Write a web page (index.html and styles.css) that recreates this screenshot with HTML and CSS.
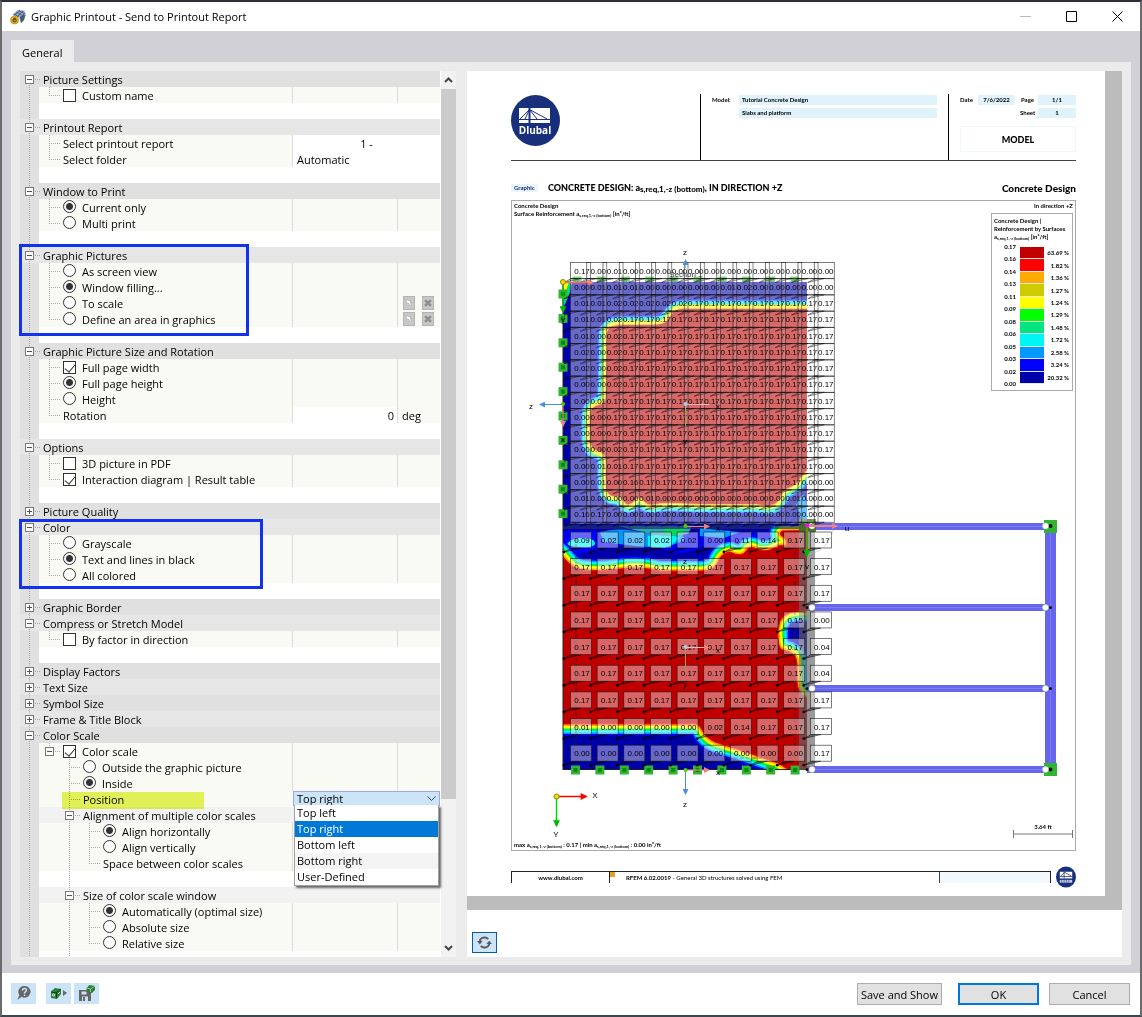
FILE: index.html
```html
<!DOCTYPE html>
<html lang="en">
<head>
<meta charset="utf-8">
<title>Graphic Printout - Send to Printout Report</title>
<link rel="stylesheet" href="styles.css">
</head>
<body>
<div class="window">
  <header class="titlebar">
    <svg class="app-icon" viewBox="0 0 16 16" aria-hidden="true">
      <path d="M2 6 8 1l6 .5 2 4.500-2 5-3 3-2-6-3-1z" fill="#8da2c2"/>
      <path d="M4 5l5 3M6.500 3l5 3M9 1.500l5 3M4 6.500l6-5M7 8l6-6M10 9l5-5" stroke="#3f5777" fill="none" stroke-width=".8"/>
      <path d="M10 8l3-2 2 0-1 5-3 3z" fill="#4a5a74"/>
      <circle cx="4.500" cy="11" r="4" fill="#e3b22c" stroke="#a87d10" stroke-width=".6"/>
      <path d="M6 9.500C4.500 8.500 3 9.500 3 11.500c0 2 3.200 2 3.200 0 0-1.500-2.500-1.600-3 0" fill="none" stroke="#6b4e08" stroke-width="1.100"/>
    </svg>
    <h1>Graphic Printout - Send to Printout Report</h1>
    <div class="window-buttons">
      <button type="button" aria-label="Minimize"><svg viewBox="0 0 11 11"><path d="M0 5.500h11" stroke="#bbb"/></svg></button>
      <button type="button" aria-label="Maximize"><svg viewBox="0 0 11 11"><path d="M.5.5h10v10H.5z" stroke="#000"/></svg></button>
      <button type="button" aria-label="Close"><svg viewBox="0 0 11 11"><path d="M.5.5l10 10M10.500.5l-10 10" stroke="#000"/></svg></button>
    </div>
  </header>

  <nav class="tabs"><button type="button" class="tab">General</button></nav>

  <main class="panel">
    <div class="settings">
      <div class="tree">
        <section class="group">
          <h2 class="head first"><button type="button" class="toggle" aria-label="Collapse"></button>Picture Settings</h2>
          <div class="row"><label class="name"><i class="branch last"></i><input type="checkbox">Custom name</label><span class="cell"></span><span class="cell"></span></div>
          <div class="row blank"></div>
        </section>
        <section class="group">
          <h2 class="head"><button type="button" class="toggle" aria-label="Collapse"></button>Printout Report</h2>
          <div class="row"><span class="name"><i class="branch"></i>Select printout report</span><span class="cell edit wide center">1 -</span></div>
          <div class="row"><span class="name"><i class="branch last"></i>Select folder</span><span class="cell edit wide">Automatic</span></div>
          <div class="row blank"></div>
        </section>
        <section class="group">
          <h2 class="head"><button type="button" class="toggle" aria-label="Collapse"></button>Window to Print</h2>
          <div class="row"><label class="name"><i class="branch"></i><input type="radio" name="window" checked>Current only</label><span class="cell"></span><span class="cell"></span></div>
          <div class="row"><label class="name"><i class="branch last"></i><input type="radio" name="window">Multi print</label><span class="cell"></span><span class="cell"></span></div>
          <div class="row blank"></div>
        </section>
        <section class="group">
          <h2 class="head"><button type="button" class="toggle" aria-label="Collapse"></button>Graphic Pictures</h2>
          <div class="row"><label class="name"><i class="branch"></i><input type="radio" name="fit">As screen view</label><span class="cell"></span><span class="cell"></span></div>
          <div class="row"><label class="name"><i class="branch"></i><input type="radio" name="fit" checked>Window filling...</label><span class="cell"></span><span class="cell"></span></div>
          <div class="row"><label class="name"><i class="branch"></i><input type="radio" name="fit">To scale</label><span class="cell"></span><span class="cell tools">
            <button type="button" disabled aria-label="Pick"><svg viewBox="0 0 12 14"><path d="M2 3l7 2-2 1 2 3-1 1-3-3-1 1z" fill="#fff" stroke="#999" stroke-width=".6"/></svg></button>
            <button type="button" disabled aria-label="Clear"><svg viewBox="0 0 12 14"><path d="M2.500 3.500l7 7M9.500 3.500l-7 7" stroke="#8f8f8f" stroke-width="3"/></svg></button></span></div>
          <div class="row"><label class="name"><i class="branch last"></i><input type="radio" name="fit">Define an area in graphics</label><span class="cell"></span><span class="cell tools">
            <button type="button" disabled aria-label="Pick"><svg viewBox="0 0 12 14"><path d="M2 3l7 2-2 1 2 3-1 1-3-3-1 1z" fill="#fff" stroke="#999" stroke-width=".6"/></svg></button>
            <button type="button" disabled aria-label="Clear"><svg viewBox="0 0 12 14"><path d="M2.500 3.500l7 7M9.500 3.500l-7 7" stroke="#8f8f8f" stroke-width="3"/></svg></button></span></div>
          <div class="row blank"></div>
          <div class="callout callout-pictures"></div>
        </section>
        <section class="group">
          <h2 class="head"><button type="button" class="toggle" aria-label="Collapse"></button>Graphic Picture Size and Rotation</h2>
          <div class="row"><label class="name"><i class="branch"></i><input type="checkbox" checked>Full page width</label><span class="cell"></span><span class="cell"></span></div>
          <div class="row"><label class="name"><i class="branch"></i><input type="radio" name="size" checked>Full page height</label><span class="cell"></span><span class="cell"></span></div>
          <div class="row"><label class="name"><i class="branch"></i><input type="radio" name="size">Height</label><span class="cell"></span><span class="cell"></span></div>
          <div class="row"><span class="name"><i class="branch last"></i>Rotation</span><span class="cell edit number">0</span><span class="cell">deg</span></div>
          <div class="row blank"></div>
        </section>
        <section class="group">
          <h2 class="head"><button type="button" class="toggle" aria-label="Collapse"></button>Options</h2>
          <div class="row"><label class="name"><i class="branch"></i><input type="checkbox">3D picture in PDF</label><span class="cell"></span><span class="cell"></span></div>
          <div class="row"><label class="name"><i class="branch last"></i><input type="checkbox" checked>Interaction diagram | Result table</label><span class="cell"></span><span class="cell"></span></div>
          <div class="row blank"></div>
        </section>
        <section class="group">
          <h2 class="head"><button type="button" class="toggle plus" aria-label="Expand"></button>Picture Quality</h2>
        </section>
        <section class="group">
          <h2 class="head"><button type="button" class="toggle" aria-label="Collapse"></button>Color</h2>
          <div class="row"><label class="name"><i class="branch"></i><input type="radio" name="color">Grayscale</label><span class="cell"></span><span class="cell"></span></div>
          <div class="row"><label class="name"><i class="branch"></i><input type="radio" name="color" checked>Text and lines in black</label><span class="cell"></span><span class="cell"></span></div>
          <div class="row"><label class="name"><i class="branch last"></i><input type="radio" name="color">All colored</label><span class="cell"></span><span class="cell"></span></div>
          <div class="row blank"></div>
          <div class="callout callout-color"></div>
        </section>
        <section class="group">
          <h2 class="head"><button type="button" class="toggle plus" aria-label="Expand"></button>Graphic Border</h2>
        </section>
        <section class="group">
          <h2 class="head"><button type="button" class="toggle" aria-label="Collapse"></button>Compress or Stretch Model</h2>
          <div class="row"><label class="name"><i class="branch last"></i><input type="checkbox">By factor in direction</label><span class="cell"></span><span class="cell"></span></div>
          <div class="row blank"></div>
        </section>
        <section class="group"><h2 class="head"><button type="button" class="toggle plus" aria-label="Expand"></button>Display Factors</h2></section>
        <section class="group"><h2 class="head"><button type="button" class="toggle plus" aria-label="Expand"></button>Text Size</h2></section>
        <section class="group"><h2 class="head"><button type="button" class="toggle plus" aria-label="Expand"></button>Symbol Size</h2></section>
        <section class="group"><h2 class="head"><button type="button" class="toggle plus" aria-label="Expand"></button>Frame &amp; Title Block</h2></section>
        <section class="group">
          <h2 class="head"><button type="button" class="toggle" aria-label="Collapse"></button>Color Scale</h2>
          <div class="row"><span class="name"><span class="knot"><button type="button" class="toggle" aria-label="Collapse"></button></span><label><input type="checkbox" checked>Color scale</label></span><span class="cell"></span><span class="cell"></span></div>
          <div class="row"><label class="name"><i class="pad"></i><i class="branch"></i><input type="radio" name="place">Outside the graphic picture</label><span class="cell"></span><span class="cell"></span></div>
          <div class="row"><label class="name"><i class="pad"></i><i class="branch"></i><input type="radio" name="place" checked>Inside</label><span class="cell"></span><span class="cell"></span></div>
          <div class="row position">
            <span class="name"><i class="pad"></i><i class="branch"></i><label for="position">Position</label></span>
            <span class="cell wide combo">
              <select id="position"><option>Top right</option></select>
              <svg class="chevron" viewBox="0 0 9 6" aria-hidden="true"><path d="M.5.5l4 4 4-4" fill="none" stroke="#444"/></svg>
              <ul class="options" role="listbox" aria-label="Position">
                <li role="option">Top left</li>
                <li role="option" aria-selected="true">Top right</li>
                <li role="option">Bottom left</li>
                <li role="option">Bottom right</li>
                <li role="option">User-Defined</li>
              </ul>
            </span>
          </div>
          <div class="row sub"><span class="name"><i class="pad"></i><span class="knot"><button type="button" class="toggle" aria-label="Collapse"></button></span>Alignment of multiple color scales</span></div>
          <div class="row"><label class="name"><i class="pad"></i><i class="pad line"></i><i class="branch"></i><input type="radio" name="align" checked>Align horizontally</label><span class="cell"></span><span class="cell"></span></div>
          <div class="row"><label class="name"><i class="pad"></i><i class="pad line"></i><i class="branch"></i><input type="radio" name="align">Align vertically</label><span class="cell"></span><span class="cell"></span></div>
          <div class="row"><span class="name"><i class="pad"></i><i class="pad line"></i><i class="branch last"></i>Space between color scales</span><span class="cell"></span><span class="cell"></span></div>
          <div class="row blank"><span class="name"><i class="pad"></i><i class="pad line"></i></span></div>
          <div class="row sub"><span class="name"><i class="pad"></i><span class="knot"><button type="button" class="toggle" aria-label="Collapse"></button></span>Size of color scale window</span></div>
          <div class="row"><label class="name"><i class="pad"></i><i class="pad line"></i><i class="branch"></i><input type="radio" name="box" checked>Automatically (optimal size)</label><span class="cell"></span><span class="cell"></span></div>
          <div class="row"><label class="name"><i class="pad"></i><i class="pad line"></i><i class="branch"></i><input type="radio" name="box">Absolute size</label><span class="cell"></span><span class="cell"></span></div>
          <div class="row"><label class="name"><i class="pad"></i><i class="pad line"></i><i class="branch last"></i><input type="radio" name="box">Relative size</label><span class="cell"></span><span class="cell"></span></div>
          <div class="row blank cut"><span class="name"><i class="pad"></i><i class="pad line"></i></span></div>
        </section>
      </div>
      <div class="scrollbar">
        <svg viewBox="0 0 9 6" aria-hidden="true"><path d="M1 5l3.500-3.500L8 5" fill="none" stroke="#444" stroke-width="2"/></svg>
        <div class="thumb"></div>
        <svg viewBox="0 0 9 6" aria-hidden="true"><path d="M1 1l3.500 3.500L8 1" fill="none" stroke="#444" stroke-width="2"/></svg>
      </div>
    </div>

    <div class="preview">
      <div class="desk">
        <article class="sheet">
          <header class="letterhead">
            <div class="brand">
              <svg viewBox="0 0 49 51" aria-label="Dlubal">
                <ellipse cx="24.500" cy="25.500" rx="24.500" ry="25.500" fill="#182f7c"/>
                <path d="M8 13h31v15H8z" fill="#fff"/>
                <path d="M8 24.500h31M9 24l9.500-9.500L36 24M14 24l4.500-9.500L26 24" stroke="#182f7c" fill="none"/>
                <path d="M18.500 13v15" stroke="#182f7c" stroke-width="2"/>
                <text x="24" y="38.500" class="logo-text">Dlubal</text>
              </svg>
            </div>
            <dl class="model">
              <dt>Model:</dt><dd>Tutorial Concrete Design</dd>
              <dd class="second">Slabs and platform</dd>
            </dl>
            <div class="meta">
              <dl>
                <dt>Date</dt><dd>7/6/2022</dd><dt>Page</dt><dd>1/1</dd>
                <dt class="sheet-no">Sheet</dt><dd>1</dd>
              </dl>
              <p class="kind">MODEL</p>
            </div>
          </header>

          <div class="caption">
            <span class="chip">Graphic</span>
            <h3>CONCRETE DESIGN: a<sub>s,req,1,-z (bottom)</sub>, IN DIRECTION +Z</h3>
            <strong>Concrete Design</strong>
          </div>

          <div class="frame">
            <svg class="plot" viewBox="512 201 563 649" role="img" aria-label="Surface reinforcement contour plot">
              <defs>
                <clipPath id="upper"><path d="M563 282h244v244H563z"/></clipPath>
                <clipPath id="lower"><path d="M563 526h244v244H563z"/></clipPath>
                <path id="upper-red" d="M830 309H690Q678 308 674 312T667 321Q664 325 650 325T622 325Q607 325 607 335V360L606 395Q606 404 599 405T590 414V438Q590 449 598 451T606 460V482Q606 496 614 496T623 500Q628 508 634 501T643 500Q648 506 655 504T680 503T705 504T730 504T757 504Q775 508 779 499T786 489Q796 485 799 480T807 470H830z"/>
                <path id="lower-red" d="M550 546Q560 552 566 560T582 570Q600 572 620 569T660 571H700Q715 571 718 562T730 552Q742 558 746 551T758 550Q768 552 774 548T786 546Q788 540 783 537T782 531L830 530V611H800Q779 611 778 630T783 650Q797 652 797 664V682Q798 694 807 698H830V775H796Q786 768 778 763L740 750L715 742Q706 738 702 730T690 724H550z"/>
                <marker id="tip-blue" viewBox="0 0 6 6" refX="5" refY="3" markerWidth="6" markerHeight="6" markerUnits="userSpaceOnUse" orient="auto"><path d="M0 0l6 3-6 3z" fill="#4a90e0"/></marker>
                <marker id="tip-pink" viewBox="0 0 6 6" refX="5" refY="3" markerWidth="6" markerHeight="6" markerUnits="userSpaceOnUse" orient="auto"><path d="M0 0l6 3-6 3z" fill="#f08080"/></marker>
                <marker id="tip-red" viewBox="0 0 6 6" refX="5" refY="3" markerWidth="8" markerHeight="7" markerUnits="userSpaceOnUse" orient="auto"><path d="M0 0l6 3-6 3z" fill="#f00"/></marker>
                <marker id="tip-green" viewBox="0 0 6 6" refX="5" refY="3" markerWidth="8" markerHeight="7" markerUnits="userSpaceOnUse" orient="auto"><path d="M0 0l6 3-6 3z" fill="#0b0"/></marker>
              </defs>

              <g id="supports-back"></g>
              <g clip-path="url(#upper)">
                <path d="M563 282h244v244H563z" fill="#0000a8"/>
                <path d="M563 282h9l-2 10-4 10-3 6z" fill="#00e080"/><path d="M563 282h6l-4 12-2 2z" fill="#ff0"/>
                <path d="M796 505q5-10 7-10t4 10v20h-4z" fill="#09f"/>
                <g class="bands">
                  <use href="#upper-red" stroke="#00f" stroke-width="20"/><use href="#upper-red" stroke="#09f" stroke-width="17"/>
                  <use href="#upper-red" stroke="#00f5f5" stroke-width="15"/><use href="#upper-red" stroke="#00e080" stroke-width="11"/>
                  <use href="#upper-red" stroke="#cf0" stroke-width="9"/><use href="#upper-red" stroke="#ff0" stroke-width="7"/>
                  <use href="#upper-red" stroke="#fa0" stroke-width="2"/>
                </g>
                <use href="#upper-red" fill="#c00000"/>
              </g>
              <g clip-path="url(#lower)">
                <path d="M563 526h244v244H563z" fill="#0000a8"/>
                <path d="M563 532q14-4 40 0t90 2q10-6 40 0l60-4v16l-20-4-40 10-30-6q-20 12-40 3t-60 0-40 2z" fill="#00f"/>
                <path d="M600 532q20-6 50 2l30-4 5 10-20 8-30-2-32-4zM700 528q18 2 40 4l-16 6-24-2z" fill="#09f"/>
                <path d="M568 543q4-5 15-5t12 5-15 4-12-4zM648 536q20-4 32 2l-10 8q-12 4-22 0z" fill="#00f5f5"/>
                <path d="M618 526h74l-4 8q-20 4-38 0z" fill="#2ca8b0"/><path d="M664 528h22l-4 6q-10 4-18-2z" fill="#00d860"/>
                <g class="bands">
                  <use href="#lower-red" stroke="#00f" stroke-width="24"/><use href="#lower-red" stroke="#09f" stroke-width="20"/>
                  <use href="#lower-red" stroke="#00f5f5" stroke-width="17"/><use href="#lower-red" stroke="#00e080" stroke-width="13"/>
                  <use href="#lower-red" stroke="#0f0" stroke-width="11"/><use href="#lower-red" stroke="#ff0" stroke-width="9"/>
                  <use href="#lower-red" stroke="#fa0" stroke-width="4"/>
                </g>
                <use href="#lower-red" fill="#c00000" stroke="#f00" stroke-width="1"/>
              </g>
              <path d="M563 282v488M563 769.500h244" stroke="#222" fill="none"/>
              <path d="M563 527h244" stroke="#222d6c" stroke-opacity=".7" stroke-width="4"/>
              <path d="M576 532v226h219V532" stroke="#222" stroke-width=".7" stroke-dasharray="4 2" fill="none"/>
              <g id="supports"></g>

              <g stroke="#6666ec" stroke-width="7"><path d="M807 526.500h243M807 607.500h243M807 688.500h243M807 769.500h243"/><path d="M1050.500 526v244" stroke-width="11"/></g>
              <g stroke="#7c7cf0" stroke-width="1"><path d="M815 526.500h230M815 607.500h230M815 688.500h230M815 769.500h230M1050.500 532v230"/></g>
              <g fill="#32b432"><path d="M1044 520h13v13h-13zM1044 763h13v13h-13z"/></g>
              <path d="M799 522h16v248h-16z" fill="#646464" fill-opacity=".66"/>
              <path d="M799 519h17v13h-17z" fill="#3c6e1e" fill-opacity=".8"/>
              <g fill="#111"><circle cx="1050.500" cy="526" r="2"/><circle cx="1050.500" cy="607.500" r="1.500"/><circle cx="1050.500" cy="688.500" r="1.500"/><circle cx="1050.500" cy="769.500" r="2"/><circle cx="807" cy="607.500" r="1.500"/><circle cx="807" cy="688.500" r="1.500"/><circle cx="807" cy="769.500" r="1.500"/></g>
              <g fill="#fff" stroke="#c8c8c8" stroke-width=".5"><circle cx="1045.500" cy="526" r="3"/><circle cx="1045.500" cy="607.500" r="3"/><circle cx="1045.500" cy="688.500" r="3"/><circle cx="1045.500" cy="769.500" r="3"/><circle cx="812" cy="526" r="3"/><circle cx="812" cy="607.500" r="3"/><circle cx="812" cy="688.500" r="3"/><circle cx="812" cy="769.500" r="3"/></g>

              <g id="labels"></g>

              <g class="axes" fill="none">
                <path d="M685.500 268v-8" stroke="#7cc8f0" marker-end="url(#tip-blue)"/>
                <path d="M563 404.500h-23" stroke="#4a90e0" marker-end="url(#tip-blue)"/>
                <path d="M685.500 770v24" stroke="#4a90e0" marker-end="url(#tip-blue)"/>
                <path d="M563 404v22" stroke="#f08080" marker-end="url(#tip-pink)"/>
                <path d="M563 282v30" stroke="#0b0" marker-end="url(#tip-green)"/>
                <path d="M563 282.500h30" stroke="#f66" stroke-width="1.500" marker-end="url(#tip-pink)"/>
                <path d="M685.500 404.500h24M685.500 647.500h23" stroke="#f4b8b8" marker-end="url(#tip-pink)"/>
                <path d="M685.500 404v22M685.500 647v24" stroke="#a0a050"/>
                <path d="M685 526.500h24" stroke="#f08080" marker-end="url(#tip-pink)"/><path d="M685 770h24" stroke="#f08080" marker-end="url(#tip-pink)"/>
                <path d="M807 526h30" stroke="#f08080" stroke-width="2" marker-end="url(#tip-pink)"/>
                <path d="M807 526v30" stroke="#5a9a10" stroke-width="2" marker-end="url(#tip-green)"/>
                <path d="M833 530a28 28 0 0 1-24 24" stroke="#bbb" stroke-width=".5"/>
                <path d="M556.500 796.500h30" stroke="#f00" stroke-width="1.500" marker-end="url(#tip-red)"/>
                <path d="M556.500 797v29" stroke="#0d0" stroke-width="1.500" marker-end="url(#tip-green)"/>
                <circle cx="556.500" cy="796.500" r="2.500" fill="#f0e000" stroke="#880"/>
                <circle cx="563" cy="282" r="2.500" fill="#f0e000" stroke="#880"/>
                <circle cx="685.500" cy="526" r="2" fill="#5c0"/><circle cx="685.500" cy="770" r="2" fill="#5c0"/><circle cx="563" cy="404" r="2" fill="#5c0"/>
                <circle cx="685.500" cy="404" r="2" fill="#a8d0e8"/><circle cx="685.500" cy="647" r="2" fill="#a8d0e8"/><circle cx="807" cy="525.500" r="2" fill="#f0f"/>
              </g>
              <g class="axis-text">
                <text x="685" y="255">z</text><text x="531" y="409">z</text><text x="685" y="807">z</text><text x="685" y="564">z</text>
                <text x="718" y="409">x</text><text x="718" y="531">x</text><text x="718" y="653">x</text><text x="718" y="775">x</text>
                <text x="685" y="444">y</text><text x="685" y="687">y</text><text x="563" y="322">y</text><text x="563" y="442">x</text>
                <text x="847" y="531">u</text><text x="807" y="569">v</text>
                <text x="595" y="798">X</text><text x="556" y="837">Y</text>
                <text x="686" y="277" fill="#444">Section 1</text>
              </g>
              <path d="M1013 834h60M1013.500 830v8M1072.500 830v8" stroke="#777" fill="none"/>
              <text class="scale-text" x="1043" y="829">3.64 ft</text>
            </svg>
            <p class="note">Concrete Design<br>Surface Reinforcement a<sub>s,req,1,-z (bottom)</sub> [in²/ft]</p>
            <p class="direction">In direction +Z</p>
            <p class="range">max a<sub>s,req,1,-z (bottom)</sub> : 0.17 | min a<sub>s,req,1,-z (bottom)</sub> : 0.00 in²/ft</p>
            <aside class="legend">
              <p>Concrete Design |<br>Reinforcement by Surfaces<br>a<sub>s,req,1,-z (bottom)</sub> [in²/ft]</p>
              <div class="scale">
                <ol class="bounds"><li>0.17</li><li>0.16</li><li>0.14</li><li>0.13</li><li>0.11</li><li>0.09</li><li>0.08</li><li>0.06</li><li>0.05</li><li>0.03</li><li>0.02</li><li>0.00</li></ol>
                <ol class="shares"><li class="c1">63.69 %</li><li class="c2">1.82 %</li><li class="c3">1.36 %</li><li class="c4">1.27 %</li><li class="c5">1.24 %</li><li class="c6">1.29 %</li><li class="c7">1.48 %</li><li class="c8">1.72 %</li><li class="c9">2.58 %</li><li class="c10">3.24 %</li><li class="c11">20.32 %</li></ol>
              </div>
            </aside>
          </div>

          <footer class="imprint">
            <div class="imprint-bar"><a href="#">www.dlubal.com</a><span class="product"><b>RFEM 6.02.0019</b> - General 3D structures solved using FEM</span><span class="spare"></span></div>
            <svg viewBox="0 0 21 22" aria-label="Dlubal">
              <ellipse cx="10.500" cy="11" rx="10.500" ry="11" fill="#182f7c"/>
              <path d="M4 5.500h13v7H4z" fill="#fff"/><path d="M4 10.500h13M5 10l4-4 7 4M8.500 5.500v7" stroke="#182f7c" stroke-width=".8" fill="none"/>
              <path d="M4 14h13v3H4z" fill="#c6cce4"/><path d="M6 14v3M8.500 14v3M11 14v3M13.500 14v3" stroke="#182f7c" stroke-width=".6"/>
            </svg>
          </footer>
        </article>
      </div>
      <div class="preview-tools">
        <button type="button" aria-label="Refresh"><svg viewBox="0 0 16 16"><path d="M3 7a5 4.500 0 0 1 9-2.500M13 9a5 4.500 0 0 1-9 2.500" fill="none" stroke="#5a5a5a" stroke-width="2"/><path d="M0 6.500h6L3 10zM10 9.500h6L13 6z" fill="#5a5a5a"/></svg></button>
      </div>
    </div>
  </main>

  <footer class="actions">
    <button type="button" class="tool" aria-label="Help"><svg viewBox="0 0 16 16"><path d="M8.500 1a6 5.800 0 1 1-3 10.800L1.500 15l1.800-5A6 5.800 0 0 1 8.500 1z" fill="#666"/><path d="M6.500 5.500q0-2 2-2t2 1.800q0 1.200-2 2.200v1M8.500 9.500v1.500" stroke="#cce4f7" stroke-width="1.400" fill="none"/></svg></button>
    <button type="button" class="tool spaced" aria-label="Load defaults"><svg viewBox="0 0 16 16"><path d="M0 6.500l4-3.500 6 1v5l-4 5-6-1z" fill="#2f7d3a"/><path d="M0 7l5 1 5-4M5.500 8v5" stroke="#123f18" fill="none"/><path d="M1.500 9h2v2h-2zM7 9l2-2" stroke="#b8e0b8" fill="none"/><path d="M12 5l4 3-4 3z" fill="#666"/></svg></button>
    <button type="button" class="tool" aria-label="Save defaults"><svg viewBox="0 0 16 16"><path d="M0 5h10l2 2v9H0z" fill="#666"/><path d="M2.500 6.500h5v3h-5zM3 11.500h6v4.500H3z" fill="#cce4f7"/><path d="M4 12h2v4H4z" fill="#666"/><path d="M7.500 3l3-3L16 1v4l-3 3-5.500-1z" fill="#2f7d3a"/><path d="M7.500 3l4 1L16 1M11.500 4v3" stroke="#a8dca8" fill="none" stroke-width=".8"/></svg></button>
    <button type="button" class="push first-push">Save and Show</button>
    <button type="button" class="push primary">OK</button>
    <button type="button" class="push">Cancel</button>
  </footer>
</div>
<script src="plot.js"></script>
</body>
</html>
```
FILE: styles.css
```css
* { box-sizing: border-box; }
body { margin: 0; background: #fff; color: #000; font: 11px/16px "Open Sans", "Noto Sans", sans-serif; }
h1, h2, h3, p, dl, dd, ol, ul { margin: 0; padding: 0; font-weight: inherit; list-style: none; }
button { margin: 0; padding: 0; border: 0; background: none; font: inherit; color: inherit; }
svg { display: block; }

.window { display: flex; flex-direction: column; min-height: 100vh; background: #d1d0d6; border: 2px solid #6b6b6b; border-top-color: #2e2e3e; border-bottom-color: #3c4752; }
.titlebar { display: flex; align-items: center; height: 29px; padding: 0 16px 0 8px; background: #fff; }
.app-icon { width: 16px; height: 16px; margin-right: 5px; }
.titlebar h1 { font-size: 11px; }
.window-buttons { display: flex; gap: 34px; margin-left: auto; }
.window-buttons button { width: 12px; height: 12px; }
.window-buttons svg { width: 11px; height: 11px; fill: none; }

.tabs { padding: 9px 9px 0; }
.tab { height: 22px; padding: 3px 12px 0 11px; background: #ebebeb; }
.panel { display: grid; grid-template-columns: 436px 1fr; gap: 11px; flex: 1; margin: 0 9px 8px; padding: 9px 9px 8px; background: #ebebeb; }

/* settings tree */
.settings { display: grid; grid-template-columns: 1fr 15px; gap: 1px; background: #fff; }
.tree { overflow-x: visible; overflow-y: clip; line-height: 18px; }
.group { position: relative; }
.head, .row { height: 16px; }
.head { position: relative; display: flex; align-items: flex-start; padding-left: 5px; font-size: 11px; background: repeating-linear-gradient(#a8a8a8 0 1px, transparent 1px 2px) 9px 0 / 1px 100% no-repeat #e0e0e0; }
.head.first { background-position: 9px 12px; }
.head::after { content: ""; position: absolute; left: 15px; top: 8px; width: 6px; height: 1px; background: repeating-linear-gradient(90deg, #a8a8a8 0 1px, transparent 1px 2px); }
.group:nth-child(even) > .head { background-color: #e6e6e6; }
.toggle { position: relative; flex: none; width: 9px; height: 9px; margin-top: 4px; background: #fff; border: 1px solid #777; }
.toggle::before { content: ""; position: absolute; left: 1px; right: 1px; top: 3px; height: 1px; background: #555; }
.toggle.plus::after { content: ""; position: absolute; top: 1px; bottom: 1px; left: 3px; width: 1px; background: #555; }
.head .toggle { margin-right: 9px; }
.row { display: grid; grid-template: 100% / 19px 1fr 105px 43px; background: #f9faf4; }
.row::before { content: ""; background: repeating-linear-gradient(#a8a8a8 0 1px, transparent 1px 2px) 9px 0 / 1px 100% no-repeat #e0e0e0; }
.row.blank { background: #fff; }
.row.cut { height: 6px; }
.row.sub { background: #f2f2f2; }
.row.sub .name { grid-column: 2 / -1; }
.name, .name label { display: flex; align-items: flex-start; white-space: nowrap; }
.cell { padding: 0 4px; border-left: 1px solid #dcdcdc; white-space: nowrap; }
.cell.edit { background: #fff; }
.cell.wide { grid-column: 3 / -1; }
.cell.center { text-align: center; }
.cell.number { text-align: right; padding-right: 3px; }
.branch, .pad, .knot { flex: none; align-self: stretch; width: 24px; }
.branch { background: repeating-linear-gradient(#a8a8a8 0 1px, transparent 1px 2px) 10px 0 / 1px 100% no-repeat, repeating-linear-gradient(90deg, #a8a8a8 0 1px, transparent 1px 2px) 10px 8px / 12px 1px no-repeat; }
.branch.last { background-size: 1px 8px, 12px 1px; }
.pad { width: 20px; }
.pad.line { background: repeating-linear-gradient(#a8a8a8 0 1px, transparent 1px 2px) 10px 0 / 1px 100% no-repeat; }
.knot { display: flex; align-items: flex-start; padding-left: 6px; background: repeating-linear-gradient(#a8a8a8 0 1px, transparent 1px 2px) 10px 0 / 1px 100% no-repeat, repeating-linear-gradient(90deg, #a8a8a8 0 1px, transparent 1px 2px) 16px 8px / 6px 1px no-repeat; }
.knot:first-child { background-size: 1px 4px, 6px 1px; }
input { appearance: none; position: relative; flex: none; width: 13px; height: 13px; margin: 2px 6px 0 0; border: 1px solid #333; background: #fff; }
input[type=radio] { margin-top: 1px; border-radius: 50%; }
input[type=radio]:checked { background: radial-gradient(circle, #333 0 3px, #fff 4px); }
input[type=checkbox]:checked::after { content: ""; position: absolute; left: 3px; top: 0; width: 5px; height: 9px; border: solid #333; border-width: 0 1px 1px 0; transform: rotate(40deg); }
.tools { display: flex; align-items: center; gap: 7px; padding-left: 5px; }
.tools button { width: 12px; height: 14px; background: #c8c8c8; border: 1px solid #b4b4b4; }
.tools svg { width: 10px; height: 12px; }
.callout { position: absolute; z-index: 2; left: -1px; border: 3px solid #1133ee; pointer-events: none; }
.callout-pictures { top: -3px; width: 230px; height: 92px; }
.callout-color { top: 0; width: 244px; height: 70px; }
.position { position: relative; }
.position::after { content: ""; position: absolute; left: 42px; top: 1px; width: 142px; height: 17px; background: #e6f55a; mix-blend-mode: multiply; z-index: 1; }
.combo { position: relative; padding: 0; border-left: 0; margin-left: 1px; line-height: 16px; }
.combo select { appearance: none; display: block; width: 100%; height: 15px; padding: 0 3px; border: 1px solid #a0a4e8; border-radius: 0; background: #cce4f7; font: inherit; line-height: 13px; color: #000; }
.chevron { position: absolute; right: 4px; top: 5px; width: 9px; height: 6px; }
.options { position: absolute; z-index: 3; left: 1px; right: 1px; top: 14px; background: #fff; border: 1px solid #a0a0a0; border-top: 0; box-shadow: 2px 2px 2px #666; }
.options li { padding: 0 2px; height: 16px; }
.options li:nth-child(4) { background: #f4f4f4; }
.options li[aria-selected] { background: #0078d7; color: #fff; }

.scrollbar { display: flex; flex-direction: column; align-items: center; gap: 6px; padding: 6px 0; background: #f2f2f2; }
.scrollbar svg { width: 9px; height: 6px; }
.thumb { width: 15px; flex: 0 0 710px; margin-bottom: auto; background: #cbcbcb; }

/* print preview */
.preview { display: flex; flex-direction: column; background: #fff; }
.desk { padding: 0 17px 14px 0; background: #bcbcbc; }
.sheet { padding: 23px 29px 8px 44px; background: #fff; font: 700 6px/8px Lato, sans-serif; }
sub { font-size: 4px; line-height: 0; vertical-align: -1px; }
.letterhead { display: grid; grid-template-columns: 189px 1fr 128px; height: 67px; border-bottom: 1px solid #444; }
.brand svg { width: 49px; height: 51px; margin-top: 1px; }
.logo-text { font: 700 10px "Open Sans", sans-serif; fill: #fff; text-anchor: middle; }
.letterhead dd { background: #e0f3fd; height: 10px; line-height: 10px; }
.letterhead dt { line-height: 10px; }
.model { display: grid; grid-template-columns: 27px 1fr; align-content: start; gap: 3px 0; padding: 1px 11px 0; border-left: 1px solid #000; }
.model dd { padding-left: 3px; }
.model .second { grid-column: 2; }
.meta { padding: 1px 0 0 11px; border-left: 1px solid #000; }
.meta dl { display: grid; grid-template-columns: 18px 37px 23px 38px; gap: 3px 0; text-align: center; }
.meta dt { text-align: left; }
.meta dd + dt { padding-left: 6px; }
.meta .sheet-no { grid-column: 3; padding-left: 5px; }
.kind { height: 26px; margin-top: 8px; border: 1px solid #eef8fd; text-align: center; font: 900 9px/26px Lato, sans-serif; }
.caption { display: flex; align-items: center; height: 39px; padding-top: 14px; }
.caption h3, .caption strong { font: 900 9px/12px Lato, sans-serif; white-space: nowrap; }
.caption h3 sub { font-size: 8px; vertical-align: -1px; }
.caption strong { margin-left: auto; font-size: 10px; }
.chip { width: 27px; margin-right: 10px; padding-left: 3px; background: #eaf6fe; color: #1a2c6c; }
.frame { position: relative; border: 1px solid #aaa; }
.plot { width: 100%; height: auto; }
.frame .note, .frame .direction, .frame .range, .legend { position: absolute; }
.note { left: 2px; top: 1px; }
.direction { right: 2px; top: 1px; }
.range { left: 2px; bottom: 1px; }
.legend { right: 2px; top: 12px; width: 82px; height: 178px; padding: 3px 3px 0 2px; border: 1px solid #aaa; background: #fff; white-space: nowrap; }
.scale { display: grid; grid-template-columns: 26px 1fr; height: 137px; margin-top: 6px; }
.bounds { display: flex; flex-direction: column; justify-content: space-between; margin: -4px 4px -4px 0; text-align: right; }
.shares { display: grid; grid-template-rows: repeat(11, 1fr); text-align: right; }
.shares li { display: flex; align-items: center; justify-content: space-between; }
.shares li::before { content: ""; width: 24px; align-self: stretch; border-bottom: 1px solid #e8e8e8; }
.shares .c1::before { background: #c00000; }
.shares .c2::before { background: #f00; }
.shares .c3::before { background: #fa0; }
.shares .c4::before { background: #cccc00; }
.shares .c5::before { background: #ff0; }
.shares .c6::before { background: #0f0; }
.shares .c7::before { background: #00e57f; }
.shares .c8::before { background: #00f5f5; }
.shares .c9::before { background: #09f; }
.shares .c10::before { background: #00f; }
.shares .c11::before { background: #0000a8; }
.bands { fill: none; stroke-linejoin: round; }
.value { font: 8px "Liberation Sans", sans-serif; fill: #000; text-anchor: middle; }
.axis-text { font: 8px "Liberation Sans", sans-serif; text-anchor: middle; }
.scale-text { font: 700 6px Lato, sans-serif; text-anchor: middle; }
.imprint { display: flex; align-items: center; gap: 5px; margin-top: 15px; }
.imprint svg { width: 20px; height: 22px; }
.imprint-bar { display: grid; grid-template-columns: 97px 1fr 111px; flex: 1; height: 12px; line-height: 11px; border: 1px solid #222; border-bottom: 0; }
.imprint-bar a { text-align: center; color: #000; text-decoration: none; }
.product { padding-left: 16px; border-left: 1px solid #222; background: linear-gradient(#e8a020, #e8a020) 0 0 / 5px 5px no-repeat; font-weight: 400; }
.spare { border-left: 1px solid #444; background: #f2f9fe; }
.preview-tools { padding: 22px 5px 4px; }
.preview-tools button { display: grid; place-items: center; width: 25px; height: 21px; background: #cce4f7; border: 1px solid #0a5a9c; }
.preview-tools svg { width: 15px; height: 15px; }

/* dialog buttons */
.actions { display: flex; align-items: center; height: 42px; padding: 0 10px 2px 9px; background: #fff; }
.tool { display: grid; place-items: center; width: 25px; height: 21px; margin-right: 3px; background: #cce4f7; }
.tool.spaced { margin-left: 7px; }
.tool svg { width: 16px; height: 16px; }
.push { width: 81px; height: 22px; margin: 2px 0 0 10px; padding-top: 1px; background: #e1e1e1; border: 1px solid #adadad; white-space: nowrap; }
.first-push { width: 85px; margin-left: auto; }
.primary { margin-left: 16px; border: 2px solid #0078d7; }
```
FILE: plot.js
```js
const NS = 'http://www.w3.org/2000/svg';
function add(parent, tag, attrs, text) {
  const el = document.createElementNS(NS, tag);
  for (const key in attrs) el.setAttribute(key, attrs[key]);
  if (text) el.textContent = text;
  parent.appendChild(el);
}

// Runs of [value, count] for each mesh row; values are hundredths of in²/ft.
const fine = [
  [[17, 1], [0, 1], [1, 1], [0, 13]],
  [[0, 1], [1, 3], [0, 5], [1, 1], [2, 1], [0, 5]],
  [[1, 2], [2, 5], [17, 9]],
  [[1, 2], [2, 1], [17, 13]],
  [[1, 1], [0, 1], [2, 1], [17, 13]],
  [[2, 1], [0, 1], [2, 1], [17, 13]],
  [[2, 1], [0, 1], [2, 1], [17, 13]],
  [[0, 2], [2, 1], [17, 13]],
  [[0, 1], [1, 1], [17, 14]],
  [[0, 2], [17, 14]],
  [[0, 2], [17, 14]],
  [[0, 2], [2, 1], [17, 13]],
  [[0, 1], [1, 2], [17, 12], [0, 1]],
  [[0, 1], [1, 1], [0, 1], [16, 1], [17, 10], [0, 2]],
  [[1, 1], [0, 3], [1, 1], [0, 8], [1, 1], [0, 2]],
  [[16, 1], [17, 1], [0, 14]]
];
const coarse = [
  [[9, 1], [2, 4], [0, 1], [11, 1], [14, 1], [17, 2]],
  [[17, 10]],
  [[17, 10]],
  [[17, 8], [15, 1], [0, 1]],
  [[17, 9], [4, 1]],
  [[17, 9], [4, 1]],
  [[17, 10]],
  [[1, 1], [0, 4], [2, 1], [14, 1], [17, 3]],
  [[0, 9], [17, 1]]
];

function drawMesh(rows, style) {
  const layer = document.getElementById('labels');
  const { x0, y0, pitch, width, height, tint, shade, nodes, inset } = style;
  rows.forEach((runs, r) => {
    const values = runs.flatMap(([v, n]) => Array(n).fill(v));
    values.forEach((v, c) => {
      const x = x0 + c * pitch, y = y0 + r * pitch;
      const nx = x - 6.5, ny = y + height + 4;
      add(layer, 'path', { d: `M${nx} ${ny}L${x + 1} ${y + height}H${x + width * 0.5}z`, fill: '#000', 'fill-opacity': shade, stroke: '#000', 'stroke-width': 0.5 });
      add(layer, 'rect', { x, y, width, height, fill: '#fff', 'fill-opacity': tint, stroke: '#111', 'stroke-opacity': 0.8, 'stroke-width': 0.7 });
      if (nodes) add(layer, 'circle', { cx: nx, cy: ny, r: 1.4, fill: '#000' });
      add(layer, 'text', { class: 'value', x: x + inset, y: y + height / 2 + 3 }, (v / 100).toFixed(2));
    });
  });
}

function support(layer, x, y) {
  add(layer, 'rect', { x: x - 4.5, y: y - 4.5, width: 9, height: 9, fill: '#32b432' });
  add(layer, 'rect', { x: x - 2, y: y - 2, width: 4, height: 4, fill: '#0a8a14' });
}
const front = document.getElementById('supports');
const back = document.getElementById('supports-back');
for (let i = 0; i < 10; i++) {
  support(front, 563, 294 + i * 24.4);
  support(front, 575.5 + i * 24.4, 770);
  support(back, 577 + i * 24.2, 281);
}

add(document.getElementById('labels'), 'rect', { x: 570, y: 262, width: 237, height: 262, fill: '#fff', 'fill-opacity': 0.34 });
drawMesh(fine, { x0: 570.5, y0: 262.5, pitch: 16.25, width: 20, height: 16, tint: 0.1, shade: 0.1, nodes: false, inset: 11.5 });
drawMesh(coarse, { x0: 570.5, y0: 532, pitch: 26.65, width: 21, height: 16, tint: 0.4, shade: 0.3, nodes: true, inset: 11.5 });
```
